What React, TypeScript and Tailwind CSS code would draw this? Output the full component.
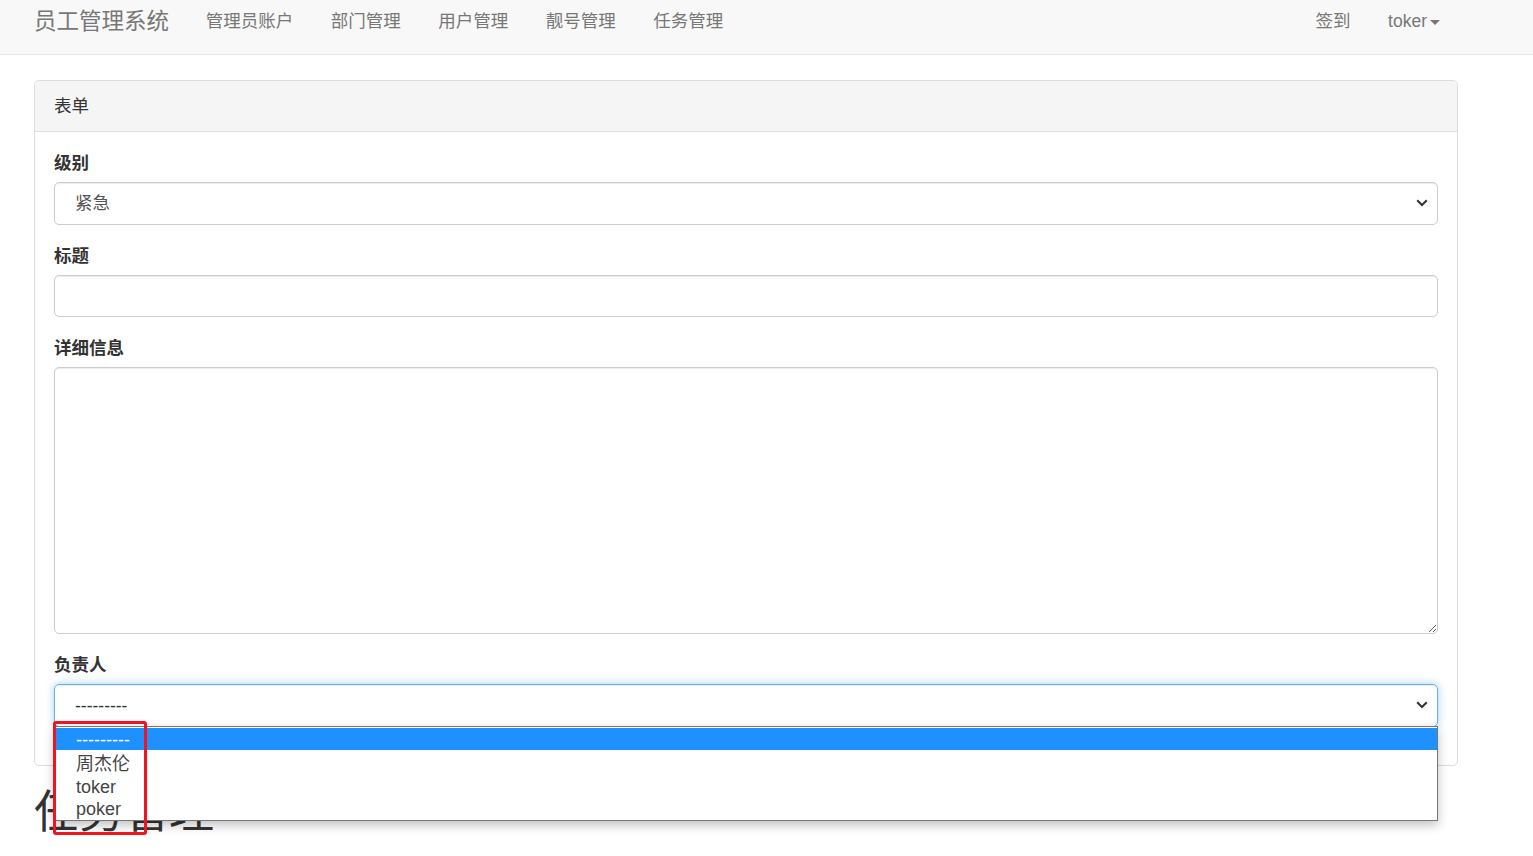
import React from 'react';

const FONT = { fontFamily: '"Liberation Sans", "Noto Sans CJK SC", Arial, sans-serif' };

const NAV_LINKS = ['管理员账户', '部门管理', '用户管理', '靓号管理', '任务管理'];
const OWNERS = ['---------', '周杰伦', 'toker', 'poker'];

function Chevron() {
  return (
    <svg className="pointer-events-none absolute right-[10px] top-1/2 -translate-y-1/2" width="12" height="8" viewBox="0 0 12 8">
      <path d="M1.2 1.2 L6 6 L10.8 1.2" fill="none" stroke="#333" strokeWidth="2" />
    </svg>
  );
}

function Label({ children }: { children: React.ReactNode }) {
  return <label className="mb-[6px] block text-[17.5px] font-bold leading-[25px] text-[#333]">{children}</label>;
}

export default function App() {
  return (
    <div className="min-h-[856px] overflow-hidden bg-white text-[#333]" style={FONT}>
      {/* navbar */}
      <div className="h-[55px] border-b border-[#e7e7e7] bg-[#f8f8f8]">
        <div className="mx-[34px] flex h-[43px] items-center justify-between">
          <div className="flex items-center">
            <span className="text-[22.5px] text-[#777]">员工管理系统</span>
            <ul className="ml-[18px] flex">
              {NAV_LINKS.map((l) => (
                <li key={l} className="px-[18.75px] text-[17.5px] text-[#777]">{l}</li>
              ))}
            </ul>
          </div>
          <ul className="mr-[40px] flex items-center text-[17.5px] text-[#777]">
            <li className="px-[18.75px]">签到</li>
            <li className="flex items-center pl-[18.75px] pr-[19px]">
              toker
              <span className="ml-[3px] mt-[2px] inline-block h-0 w-0 border-x-[5px] border-t-[5px] border-x-transparent border-t-[#777]" />
            </li>
          </ul>
        </div>
      </div>

      <div className="mx-[34px] w-[1424px]">
        {/* panel */}
        <div className="mt-[25px] rounded-[5px] border border-[#ddd]">
          <div className="rounded-t-[5px] border-b border-[#ddd] bg-[#f5f5f5] px-[19px] py-[12.5px] text-[17.5px] leading-[25px]">表单</div>
          <div className="p-[19px]">
            <div className="mb-[19px]">
              <Label>级别</Label>
              <div className="relative">
                <div className="h-[42.5px] rounded-[5px] border border-[#ccc] pl-[20px] text-[17.5px] leading-[41px] text-[#555] shadow-[inset_0_1px_1px_rgba(0,0,0,0.075)]">紧急</div>
                <Chevron />
              </div>
            </div>
            <div className="mb-[19px]">
              <Label>标题</Label>
              <input className="block h-[42.5px] w-full rounded-[5px] border border-[#ccc] px-[15px] text-[17.5px] shadow-[inset_0_1px_1px_rgba(0,0,0,0.075)] outline-none" />
            </div>
            <div className="mb-[19px]">
              <Label>详细信息</Label>
              <textarea className="block h-[267px] w-full rounded-[5px] border border-[#ccc] px-[15px] text-[17.5px] shadow-[inset_0_1px_1px_rgba(0,0,0,0.075)] outline-none" />
            </div>
            <div className="mb-[19px]">
              <Label>负责人</Label>
              <div className="relative">
                <div className="h-[42.5px] rounded-[5px] border border-[#66afe9] pl-[20px] text-[17.5px] leading-[43px] text-[#333] shadow-[inset_0_1px_1px_rgba(0,0,0,0.075),0_0_8px_rgba(102,175,233,0.6)]">---------</div>
                <Chevron />
                {/* open option list */}
                <div className="absolute left-0 right-0 top-[42px] z-20 h-[95px] border border-[#767676] bg-white pt-[1px] shadow-[0_4px_10px_rgba(0,0,0,0.25)]">
                  {OWNERS.map((o, i) => (
                    <div
                      key={o}
                      className={`pl-[21px] text-[18px] ${i === 0 ? 'h-[22px] bg-[#1e90ff] leading-[24px] text-white' : 'h-[22.5px] leading-[29px] text-[#444]'}`}
                    >
                      {o}
                    </div>
                  ))}
                </div>
                {/* annotation box */}
                <div className="absolute left-[-1px] top-[37px] z-30 h-[114px] w-[94px] rounded-[3px] border-[3px] border-[#f0141e]" />
              </div>
            </div>
          </div>
        </div>

        <h1 className="mt-[22px] text-[45px] font-normal leading-[50px] text-[#333]">任务管理</h1>
      </div>
    </div>
  );
}
